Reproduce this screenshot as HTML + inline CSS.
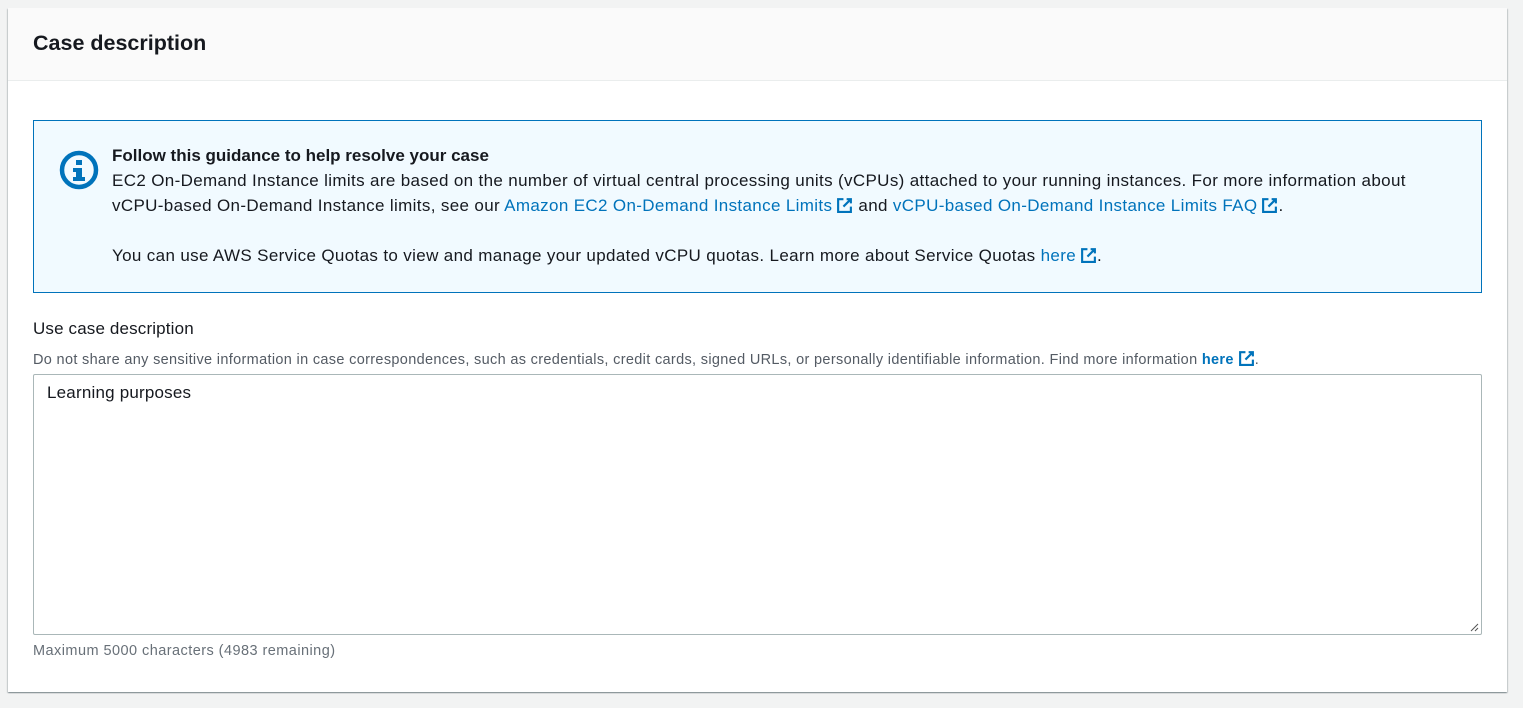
<!DOCTYPE html>
<html><head><meta charset="utf-8"><style>
body{margin:0;background:#f2f3f3;font-family:"Liberation Sans",sans-serif;color:#16191f;width:1523px;height:708px;overflow:hidden;position:relative}
.card{position:absolute;left:8px;top:8px;width:1499px;height:684px;background:#fff;box-shadow:0 1px 1px rgba(0,28,36,.3),1px 1px 1px rgba(0,28,36,.15),-1px 1px 1px rgba(0,28,36,.15);}
.hdr{height:72px;background:#fafafa;border-bottom:1px solid #eaeded;}
.hdr h2{margin:0;position:absolute;left:25px;top:23px;font-size:21.5px;font-weight:bold;}
.info{position:absolute;left:25px;top:112px;width:1447px;height:171px;border:1px solid #0073bb;background:#f1faff;}
.info .t{position:absolute;left:78px;top:22px;font-size:17px;letter-spacing:0.35px;line-height:25px;}
.info .t b{letter-spacing:0}
a{color:#0073bb;text-decoration:none}
.ext{display:inline-block;vertical-align:-3px;margin-left:4px}
.lbl{position:absolute;left:25px;top:311px;font-size:17px;letter-spacing:0.15px}
.hint{position:absolute;left:25px;top:342px;font-size:14.5px;letter-spacing:0.33px;color:#545b64}
.ta{position:absolute;left:25px;top:366px;width:1447px;height:259px;border:1px solid #aab7b8;border-radius:2px;}
.ta span{position:absolute;left:13px;top:8px;font-size:17px;letter-spacing:0.2px}
.foot{position:absolute;left:25px;top:635px;font-size:14.5px;letter-spacing:0.45px;color:#687078}
</style></head><body>
<div class="card">
<div class="hdr"><h2>Case description</h2></div>
<div class="info">
<svg style="position:absolute;left:25px;top:29px" width="40" height="40" viewBox="0 0 40 40"><circle cx="20" cy="20" r="17" fill="none" stroke="#0073bb" stroke-width="4.5"/><rect x="17" y="10" width="6" height="5" fill="#0073bb"/><path d="M14 18h9v9h3v4H14v-4h3v-5h-3z" fill="#0073bb"/></svg>
<div class="t"><b>Follow this guidance to help resolve your case</b><br>EC2 On-Demand Instance limits are based on the number of virtual central processing units (vCPUs) attached to your running instances. For more information about<br>vCPU-based On-Demand Instance limits, see our <a>Amazon EC2 On-Demand Instance Limits<svg class="ext" width="17" height="17" viewBox="0 0 16 16"><path d="M7 2H2v12h12V9M10 2h4v4M14 2L7 9" fill="none" stroke="#0073bb" stroke-width="2"/></svg></a> and <a>vCPU-based On-Demand Instance Limits FAQ<svg class="ext" width="17" height="17" viewBox="0 0 16 16"><path d="M7 2H2v12h12V9M10 2h4v4M14 2L7 9" fill="none" stroke="#0073bb" stroke-width="2"/></svg></a>.<br><br>You can use AWS Service Quotas to view and manage your updated vCPU quotas. Learn more about Service Quotas <a>here<svg class="ext" width="17" height="17" viewBox="0 0 16 16"><path d="M7 2H2v12h12V9M10 2h4v4M14 2L7 9" fill="none" stroke="#0073bb" stroke-width="2"/></svg></a>.</div>
</div>
<div class="lbl">Use case description</div>
<div class="hint">Do not share any sensitive information in case correspondences, such as credentials, credit cards, signed URLs, or personally identifiable information. Find more information <a style="font-weight:bold">here<svg class="ext" width="17" height="17" viewBox="0 0 16 16"><path d="M7 2H2v12h12V9M10 2h4v4M14 2L7 9" fill="none" stroke="#0073bb" stroke-width="2"/></svg></a>.</div>
<div class="ta"><span>Learning purposes</span><svg style="position:absolute;right:2px;bottom:2px" width="9" height="9"><path d="M1 8L8 1M5 8L8 5" stroke="#555" stroke-width="1"/></svg></div>
<div class="foot">Maximum 5000 characters (4983 remaining)</div>
</div>
</body></html>
